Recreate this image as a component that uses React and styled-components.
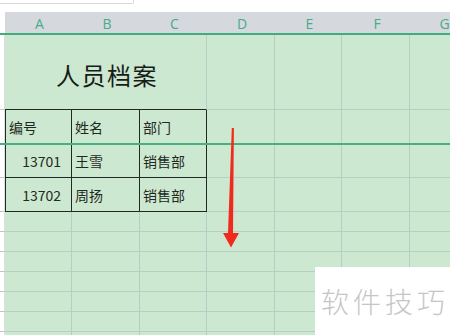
import React from 'react'
import styled, { createGlobalStyle } from 'styled-components'

const GlobalStyle = createGlobalStyle`
  html, body {
    margin: 0;
    padding: 0;
    background: #ffffff;
  }
  body {
    font-family: "Noto Sans CJK SC", "Noto Sans", sans-serif;
  }
`

const COLUMNS = ['A', 'B', 'C', 'D', 'E', 'F', 'G']
const WIDTHS = [67, 68, 67, 68, 67, 68, 67]
const GRID = '#b7cec3'
const INK = '#1f2a22'

const Screen = styled.div`
  position: relative;
  width: 450px;
  height: 335px;
  overflow: hidden;
  background: #ffffff;
`

const TopBar = styled.div`
  height: 12px;
  background: #ffffff;
`

const NameBox = styled.div`
  width: 133px;
  height: 3px;
  border-right: 1px solid #dadada;
  border-bottom: 1px solid #dadada;
  border-bottom-right-radius: 2px;
`

const Sheet = styled.div`
  display: grid;
  grid-template-columns: 5px ${WIDTHS.map(w => `${w}px`).join(' ')};
  grid-template-rows: 23px 75px 34px 34px 34px repeat(7, 20px);
`

const Corner = styled.div`
  background: #ffffff;
  border-bottom: 2px solid #3fae7c;
`

const ColHead = styled.div`
  display: flex;
  align-items: center;
  justify-content: center;
  background: #d5d8dc;
  border-bottom: 2px solid #3fae7c;
  color: #45ad88;
  font-family: "Open Sans", "Noto Sans", sans-serif;
  font-size: 14px;
  padding: 1px 0 0 2px;
`

const RowTick = styled.div`
  background: #ffffff;
  border-right: 1px solid #dedede;
  border-bottom: 1px solid #c4c4c4;
`

const Cell = styled.div`
  box-sizing: border-box;
  display: flex;
  align-items: center;
  justify-content: ${p => (p.$num ? 'flex-end' : p.$center ? 'center' : 'flex-start')};
  grid-column: ${p => (p.$span ? `span ${p.$span}` : 'auto')};
  padding: ${p => (p.$num ? '0 10px 0 0' : '0 0 0 3px')};
  background: #cde8d0;
  border-right: 1px solid ${p => (p.$boxed ? INK : GRID)};
  border-bottom: 1px solid ${p => (p.$boxed || p.$edge ? INK : GRID)};
  border-left: ${p => (p.$first ? `1px solid ${INK}` : 'none')};
  color: ${INK};
  font-size: 14px;
  white-space: nowrap;
`

const Title = styled.span`
  font-size: 24px;
  letter-spacing: 1.5px;
  color: #161d18;
  margin-top: 4px;
`

const FreezeLine = styled.div`
  position: absolute;
  left: 0;
  right: 0;
  top: 143px;
  height: 2px;
  background: #46b07f;
`

const Arrow = styled.svg`
  position: absolute;
  left: 218px;
  top: 124px;
`

const Watermark = styled.div`
  position: absolute;
  left: 315px;
  top: 267px;
  right: 0;
  bottom: 0;
  background: #ffffff;
  padding: 14px 0 0 6px;
  color: #c6c6c6;
  font-size: 28px;
  font-weight: 300;
  letter-spacing: 4px;
`

const records = [
  ['13701', '王雪', '销售部'],
  ['13702', '周扬', '销售部'],
]

function EmptyCells({ from }) {
  return COLUMNS.slice(from).map(c => <Cell key={c} />)
}

export default function App() {
  return (
    <Screen>
      <GlobalStyle />
      <TopBar>
        <NameBox />
      </TopBar>
      <Sheet>
        <Corner />
        {COLUMNS.map(c => (
          <ColHead key={c}>{c}</ColHead>
        ))}

        <RowTick />
        <Cell $span={3} $center $edge>
          <Title>人员档案</Title>
        </Cell>
        <EmptyCells from={3} />

        <RowTick />
        <Cell $boxed $first>编号</Cell>
        <Cell $boxed>姓名</Cell>
        <Cell $boxed>部门</Cell>
        <EmptyCells from={3} />

        {records.map(([id, name, dept]) => (
          <React.Fragment key={id}>
            <RowTick />
            <Cell $boxed $first $num>{id}</Cell>
            <Cell $boxed>{name}</Cell>
            <Cell $boxed>{dept}</Cell>
            <EmptyCells from={3} />
          </React.Fragment>
        ))}

        {Array.from({ length: 7 }).map((_, i) => (
          <React.Fragment key={i}>
            <RowTick />
            <EmptyCells from={0} />
          </React.Fragment>
        ))}
      </Sheet>

      <FreezeLine />

      <Arrow width="26" height="128" viewBox="0 0 26 128">
        <polygon
          points="13.8,4 15.9,4 15,109 21,109 13,123.5 5,109 10,109"
          fill="#f02a1c"
        />
      </Arrow>

      <Watermark>软件技巧</Watermark>
    </Screen>
  )
}
